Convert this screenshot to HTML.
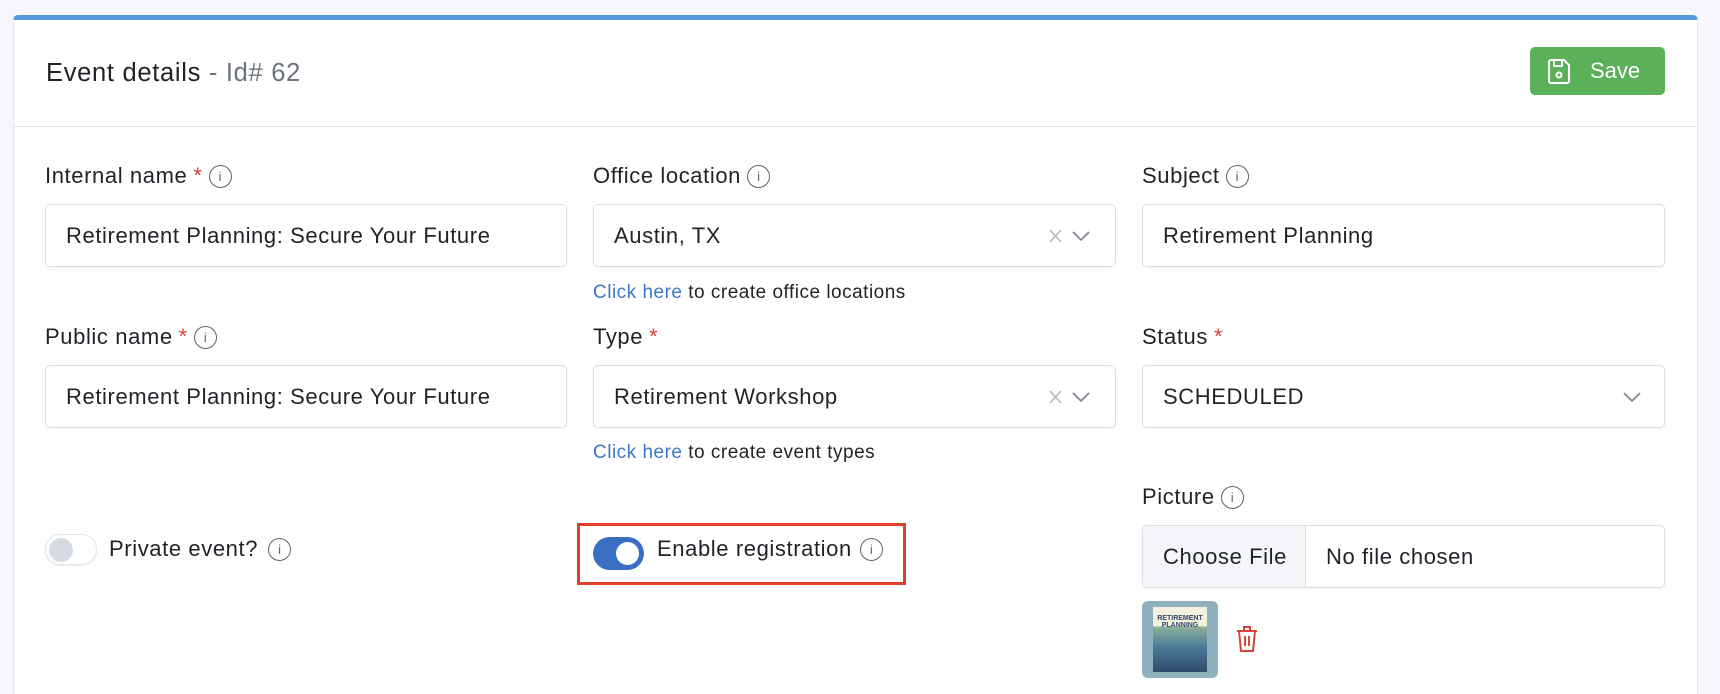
<!DOCTYPE html>
<html><head><style>
*{box-sizing:border-box;margin:0;padding:0}
html,body{width:1720px;height:694px;overflow:hidden}
body{background:#f6f7fb;font-family:"Liberation Sans",sans-serif;color:#1f2328;position:relative}
.card{position:absolute;left:13px;top:15px;width:1685px;height:679px;background:#fff;border:1px solid #e3e5ea;border-bottom:none;border-top:5px solid #5499db;border-radius:5px 5px 0 0}
.abs{position:absolute}
.title{left:32px;top:39px;font-size:25.5px;letter-spacing:.7px;color:#1f2328}
.title span{color:#6b7280}
.hr{left:0;right:0;top:106px;height:1px;background:#e3e5ea}
.save{left:1530px;top:47px;width:135px;height:48px;background:#5cb05a;border-radius:5px;color:#fff;font-size:22px}
.lbl{font-size:22px;letter-spacing:.6px;color:#1f2328;display:flex;align-items:center;gap:6px}
.req{color:#d9443a}
.info{width:23px;height:23px;border:1.6px solid #5b6370;border-radius:50%;display:inline-flex;align-items:center;justify-content:center;font-size:13px;color:#5b6370;letter-spacing:0}
.inp{height:63px;border:1px solid #dcdfe4;border-radius:5px;box-shadow:0 1px 2px rgba(0,0,0,.06);font-size:22px;letter-spacing:.6px;padding-left:20px;display:flex;align-items:center}
.hint{font-size:19px;letter-spacing:.5px;color:#1f2328}
.hint a{color:#3a78c9;text-decoration:none}
.chev{position:absolute;right:22px;top:22px}
</style></head><body>
<div class="card">
<div class="abs title">Event details <span>- Id# 62</span></div>
<div class="abs hr"></div>
</div>
<div class="abs save">
<svg class="abs" style="left:18px;top:12px" width="22" height="25" viewBox="0 0 22 25" fill="none" stroke="#fff" stroke-width="2"><path d="M3 1h13l5 5v16a2 2 0 0 1-2 2H3a2 2 0 0 1-2-2V3a2 2 0 0 1 2-2z"/><path d="M6 1v6h8V1"/><circle cx="11" cy="16" r="2.5"/></svg>
<span class="abs" style="left:60px;top:11px">Save</span></div>

<div class="abs lbl" style="left:45px;top:163px">Internal name <span class="req">*</span><span class="info">i</span></div>
<div class="abs lbl" style="left:593px;top:163px">Office location <span class="info">i</span></div>
<div class="abs lbl" style="left:1142px;top:163px">Subject <span class="info">i</span></div>

<div class="abs inp" style="left:45px;top:204px;width:522px">Retirement Planning: Secure Your Future</div>
<div class="abs inp" style="left:593px;top:204px;width:523px">Austin, TX
<svg class="chev" width="44" height="18" viewBox="0 0 44 18" fill="none" stroke-width="1.6"><path d="M1 3l11 12M12 3L1 15" stroke="#b5b9c0"/><path d="M24 5l8 8 8-8" stroke="#7b818b"/></svg></div>
<div class="abs inp" style="left:1142px;top:204px;width:523px">Retirement Planning</div>
<div class="abs hint" style="left:593px;top:282px"><a>Click here</a> to create office locations</div>

<div class="abs lbl" style="left:45px;top:324px">Public name <span class="req">*</span><span class="info">i</span></div>
<div class="abs lbl" style="left:593px;top:324px">Type <span class="req">*</span></div>
<div class="abs lbl" style="left:1142px;top:324px">Status <span class="req">*</span></div>

<div class="abs inp" style="left:45px;top:365px;width:522px">Retirement Planning: Secure Your Future</div>
<div class="abs inp" style="left:593px;top:365px;width:523px">Retirement Workshop
<svg class="chev" width="44" height="18" viewBox="0 0 44 18" fill="none" stroke-width="1.6"><path d="M1 3l11 12M12 3L1 15" stroke="#b5b9c0"/><path d="M24 5l8 8 8-8" stroke="#7b818b"/></svg></div>
<div class="abs inp" style="left:1142px;top:365px;width:523px">SCHEDULED
<svg class="chev" width="20" height="18" viewBox="0 0 20 18" fill="none" stroke-width="1.6"><path d="M2 5l8 8 8-8" stroke="#7b818b"/></svg></div>
<div class="abs hint" style="left:593px;top:442px"><a>Click here</a> to create event types</div>

<div class="abs lbl" style="left:1142px;top:484px">Picture <span class="info">i</span></div>
<div class="abs inp" style="left:1142px;top:525px;width:523px;padding:0;overflow:hidden">
<div style="width:163px;height:100%;background:#f4f6f9;border-right:1px solid #dcdfe4;display:flex;align-items:center;padding-left:20px">Choose File</div>
<div style="padding-left:20px">No file chosen</div></div>

<div class="abs" style="left:1142px;top:601px;width:76px;height:77px;border-radius:6px;background:#8fb0bd">
<div class="abs" style="left:11px;top:6px;width:54px;height:65px;background:linear-gradient(#f4f0e0 0 30%,#8fb29a 30%,#4d7d9a 60%,#2e4a6a 100%)"></div>
<div class="abs" style="left:13px;top:14px;width:50px;font-size:7px;font-weight:bold;color:#2e4a6a;text-align:center;line-height:7px">RETIREMENT<br>PLANNING</div></div>
<svg class="abs" style="left:1236px;top:626px" width="22" height="26" viewBox="0 0 22 26" fill="none" stroke="#d9443a" stroke-width="2"><path d="M1 5h20M8 5V1h6v4M3 5l2 20h12l2-20M9 10v10M13 10v10"/></svg>

<div class="abs" style="left:45px;top:534px;width:52px;height:31px;border:1px solid #e3e5ea;border-radius:16px;box-shadow:0 1px 2px rgba(0,0,0,.08)"><div class="abs" style="left:3px;top:3px;width:24px;height:24px;border-radius:50%;background:#d6dae2"></div></div>
<div class="abs lbl" style="left:109px;top:536px">Private event? <span class="info" style="margin-left:4px">i</span></div>

<div class="abs" style="left:577px;top:523px;width:329px;height:62px;border:3px solid #e0402e"></div>
<div class="abs" style="left:593px;top:537px;width:51px;height:33px;border-radius:17px;background:#3a6fc4"><div class="abs" style="left:23px;top:5px;width:23px;height:23px;border-radius:50%;background:#fff"></div></div>
<div class="abs lbl" style="left:657px;top:536px">Enable registration <span class="info" style="margin-left:2px">i</span></div>
</body></html>
